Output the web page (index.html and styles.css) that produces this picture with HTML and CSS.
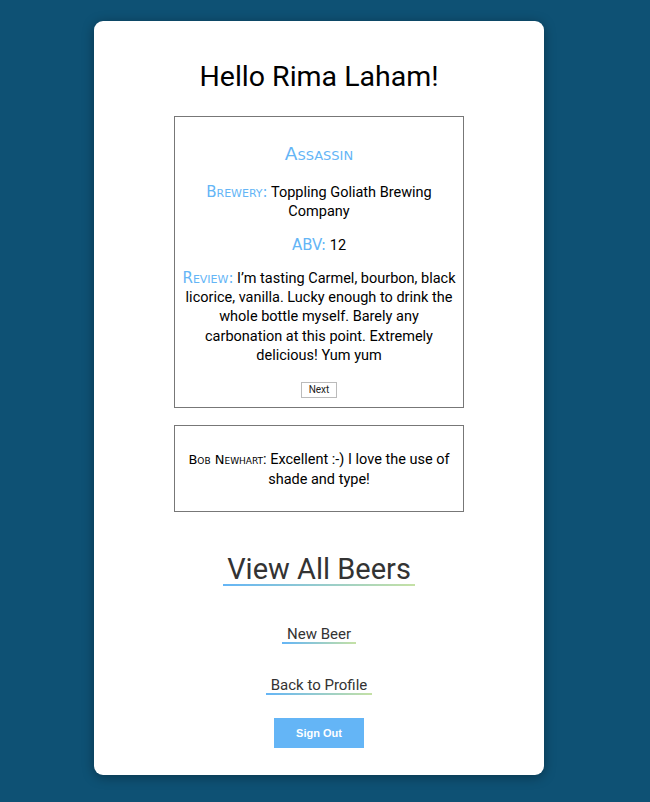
FILE: index.html
```html
<!DOCTYPE html>
<html>
<head>
<meta charset="utf-8">
<link rel="stylesheet" href="styles.css">
</head>
<body>
<main class="card">
  <h1 class="title">Hello Rima Laham!</h1>
  <section class="box beer">
    <h3 class="beer-name">Assassin</h3>
    <p><span class="label">Brewery:</span> Toppling Goliath Brewing Company</p>
    <p><span class="label">ABV:</span> 12</p>
    <p><span class="label">Review:</span> I’m tasting Carmel, bourbon, black licorice, vanilla. Lucky enough to drink the whole bottle myself. Barely any carbonation at this point. Extremely delicious! Yum yum</p>
    <button class="next">Next</button>
  </section>
  <section class="box comment">
    <p><span class="author">Bob Newhart</span>: Excellent :-) I love the use of shade and type!</p>
  </section>
  <nav class="links">
    <a class="link big" href="#">View All Beers</a>
    <a class="link" href="#">New Beer</a>
    <a class="link" href="#">Back to Profile</a>
    <button class="signout">Sign Out</button>
  </nav>
</main>
</body>
</html>
```
FILE: styles.css
```css
html, body {
  margin: 0;
  padding: 0;
}
body {
  background: #0e5174;
  font-family: Roboto, "Liberation Sans", sans-serif;
  min-height: 802px;
}
.card {
  width: 450px;
  box-sizing: border-box;
  margin: 21px 0 0 94px;
  background: #fff;
  border-radius: 9px;
  box-shadow: 0 2px 12px rgba(0,0,0,0.35);
  padding: 38px 80px 27px;
  display: flex;
  flex-direction: column;
  align-items: center;
}
.title {
  margin: 0 0 21px;
  font-size: 28.5px;
  font-weight: 400;
  line-height: 36px;
  color: #000;
}
.box {
  width: 290px;
  box-sizing: border-box;
  border: 1px solid #777;
  padding: 10px 6px 9px;
  text-align: center;
  font-size: 14.5px;
  line-height: 19.25px;
  color: #000;
}
.box p {
  margin: 14px 0;
}
.beer-name {
  margin: 17px 0 19px;
  font-family: "DejaVu Sans", sans-serif;
  font-variant: small-caps;
  font-weight: 400;
  font-size: 18.5px;
  line-height: 20px;
  color: #64b5f6;
}
.label {
  font-family: "DejaVu Sans", sans-serif;
  font-variant: small-caps;
  font-size: 15px;
  line-height: 1;
  color: #64b5f6;
}
.next {
  margin: 3px 0 0;
  font-family: Roboto, sans-serif;
  font-size: 10px;
  background: #fff;
  border: 1px solid #bbb;
  padding: 1px 7px;
  height: 16px;
  line-height: 12px;
  color: #222;
}
.comment {
  margin-top: 17px;
  padding: 10px 10px;
}
.comment p {
  margin: 14px 0 12px;
}
.author {
  font-variant: small-caps;
  font-family: "DejaVu Sans", sans-serif;
  font-size: 13px;
  line-height: 1;
}
.links {
  display: flex;
  flex-direction: column;
  align-items: center;
  margin-top: 40px;
}
.link {
  color: #333;
  text-decoration: none;
  font-size: 15px;
  line-height: 18px;
  padding: 0 5px 1px;
  background: linear-gradient(90deg, #64b5f6, #c5e1a5) no-repeat left bottom / 100% 2px;
  margin-bottom: 32px;
}
.link.big {
  font-size: 29px;
  line-height: 34px;
  padding: 0 4.5px 0;
  margin-bottom: 39px;
}
.signout {
  margin-top: -9px;
  width: 90px;
  height: 30px;
  background: #64b5f6;
  border: none;
  color: #fff;
  font-family: "Liberation Sans", Arial, sans-serif;
  font-weight: 700;
  font-size: 11px;
}
```
